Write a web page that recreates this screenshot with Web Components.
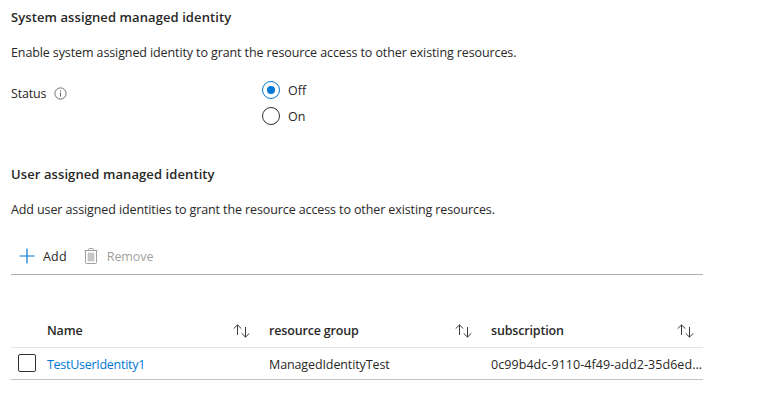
<!DOCTYPE html>
<html lang="en">
<head>
<meta charset="utf-8">
<title>Managed identity</title>
<style>
body { margin: 0; background: #fff; color: #292827; font: 12.5px/18px "Open Sans", "Noto Sans", sans-serif; }
</style>
</head>
<body>
<identity-page></identity-page>
<script>
const define = (name, html) => {
  const template = document.createElement('template');
  template.innerHTML = html;
  customElements.define(name, class extends HTMLElement {
    constructor() {
      super();
      this.attachShadow({ mode: 'open' }).append(template.content.cloneNode(true));
    }
  });
};

define('info-icon', `
<style>:host{display:block;width:13px;height:13px}svg{display:block}</style>
<svg width="13" height="13" viewBox="0 0 13 13" fill="none" stroke="#605e5c">
<circle cx="6.5" cy="6.5" r="5.6" stroke-width=".9"/><path d="M6.5 5.6v4M6.5 3.3v1.2"/></svg>`);

define('add-icon', `
<style>:host{display:block;width:16px;height:16px}svg{display:block}</style>
<svg width="16" height="16" viewBox="0 0 16 16" fill="none" stroke="#0078d4" stroke-width="1.2"><path d="M.5 8h15M8 .5v15"/></svg>`);

define('trash-icon', `
<style>:host{display:block;width:14px;height:16px}svg{display:block}</style>
<svg width="14" height="16" viewBox="0 0 14 16" fill="none" stroke="#a19f9d">
<path d="M.5 2.5h13M4.5 2.5v-1q0-1 1-1h3q1 0 1 1v1M1.5 2.5v12q0 1 1 1h9q1 0 1-1v-12"/><path d="M4 5h6v8H4z" fill="#c8c6c4" stroke="#c0bebc" stroke-width=".6"/></svg>`);

define('sort-icon', `
<style>:host{display:block;width:17px;height:14px}svg{display:block}</style>
<svg width="17" height="14" viewBox="0 0 17 14" fill="none" stroke="#3b3a39">
<path d="M4.5 11V1M.7 4.6 4.5.9l3.8 3.7M12.5 3v10M8.7 9.4l3.8 3.7 3.8-3.7"/></svg>`);

define('radio-option', `
<style>
:host{display:flex;align-items:center;gap:8px;height:26px}
i{box-sizing:border-box;width:18px;height:18px;border:1.4px solid #323130;border-radius:50%;display:grid;place-items:center}
:host([checked]) i{border-color:#0078d4}
:host([checked]) i::after{content:"";width:8px;height:8px;border-radius:50%;background:#0078d4}
span{padding-top:2px}
</style><i></i><span><slot></slot></span>`);

define('identity-heading', `
<style>:host{display:block;font-size:13px;font-weight:600;letter-spacing:.09px;line-height:18px}</style><slot></slot>`);

define('status-field', `
<style>
:host{display:grid;grid-template-columns:251px auto;align-items:start}
.label{display:flex;align-items:center;gap:8px;height:18px;margin-top:7px;letter-spacing:-.2px}
.label span{padding-top:2px}
</style>
<div class="label"><span>Status</span><info-icon></info-icon></div>
<div><radio-option checked>Off</radio-option><radio-option>On</radio-option></div>`);

define('command-button', `
<style>:host{display:flex;align-items:center;gap:8px}:host([disabled]){color:#a19f9d}span{padding-top:2px}</style>
<slot name="icon"></slot><span><slot></slot></span>`);

define('command-bar', `
<style>
:host{box-sizing:border-box;display:flex;align-items:center;gap:17px;height:37px;padding:0 0 1px 8px;border-bottom:1px solid #b3b1af}
.add{letter-spacing:.2px}.remove{letter-spacing:-.1px;gap:9px}
</style>
<command-button class="add"><add-icon slot="icon"></add-icon>Add</command-button>
<command-button class="remove" disabled><trash-icon slot="icon"></trash-icon>Remove</command-button>`);

define('column-header', `
<style>:host{display:flex;align-items:center;justify-content:space-between;padding-right:19px;font-weight:600;letter-spacing:-.17px}</style>
<span><slot></slot></span><sort-icon></sort-icon>`);

define('check-box', `
<style>:host{box-sizing:border-box;display:block;width:18px;height:18px;border:1px solid #323130;border-radius:2px;margin:0 0 1px 7px}</style>`);

define('identity-table', `
<style>
:host{display:block}
.row{box-sizing:border-box;display:grid;grid-template-columns:36px 222px 222px 212px;align-items:center;white-space:nowrap}
.head{height:34px;border-bottom:1px solid #e6e5e4}
.data{height:32px;border-bottom:1px solid #c3c2c1}
.data a,.data span{padding-top:2px}
a{color:#0078d4;letter-spacing:-.28px}
.group{letter-spacing:-.11px}.sub{letter-spacing:.06px}
.last{padding-right:9px}
</style>
<div class="row head"><span></span><column-header>Name</column-header><column-header>resource group</column-header><column-header class="last">subscription</column-header></div>
<div class="row data"><check-box></check-box><a>TestUserIdentity1</a><span class="group">ManagedIdentityTest</span><span class="sub">0c99b4dc-9110-4f49-add2-35d6ed...</span></div>`);

define('identity-page', `
<style>
:host{display:flex;flex-direction:column;box-sizing:border-box;width:703px;padding:8px 0 0 11px}
p{margin:18px 0 0;height:17px;letter-spacing:-.108px;white-space:nowrap}
status-field{margin-top:16px;height:52px}
.second{margin-top:36px}
command-bar{margin-top:20px}
identity-table{margin-top:39px}
</style>
<identity-heading>System assigned managed identity</identity-heading>
<p>Enable system assigned identity to grant the resource access to other existing resources.</p>
<status-field></status-field>
<identity-heading class="second">User assigned managed identity</identity-heading>
<p>Add user assigned identities to grant the resource access to other existing resources.</p>
<command-bar></command-bar>
<identity-table></identity-table>`);
</script>
</body>
</html>
